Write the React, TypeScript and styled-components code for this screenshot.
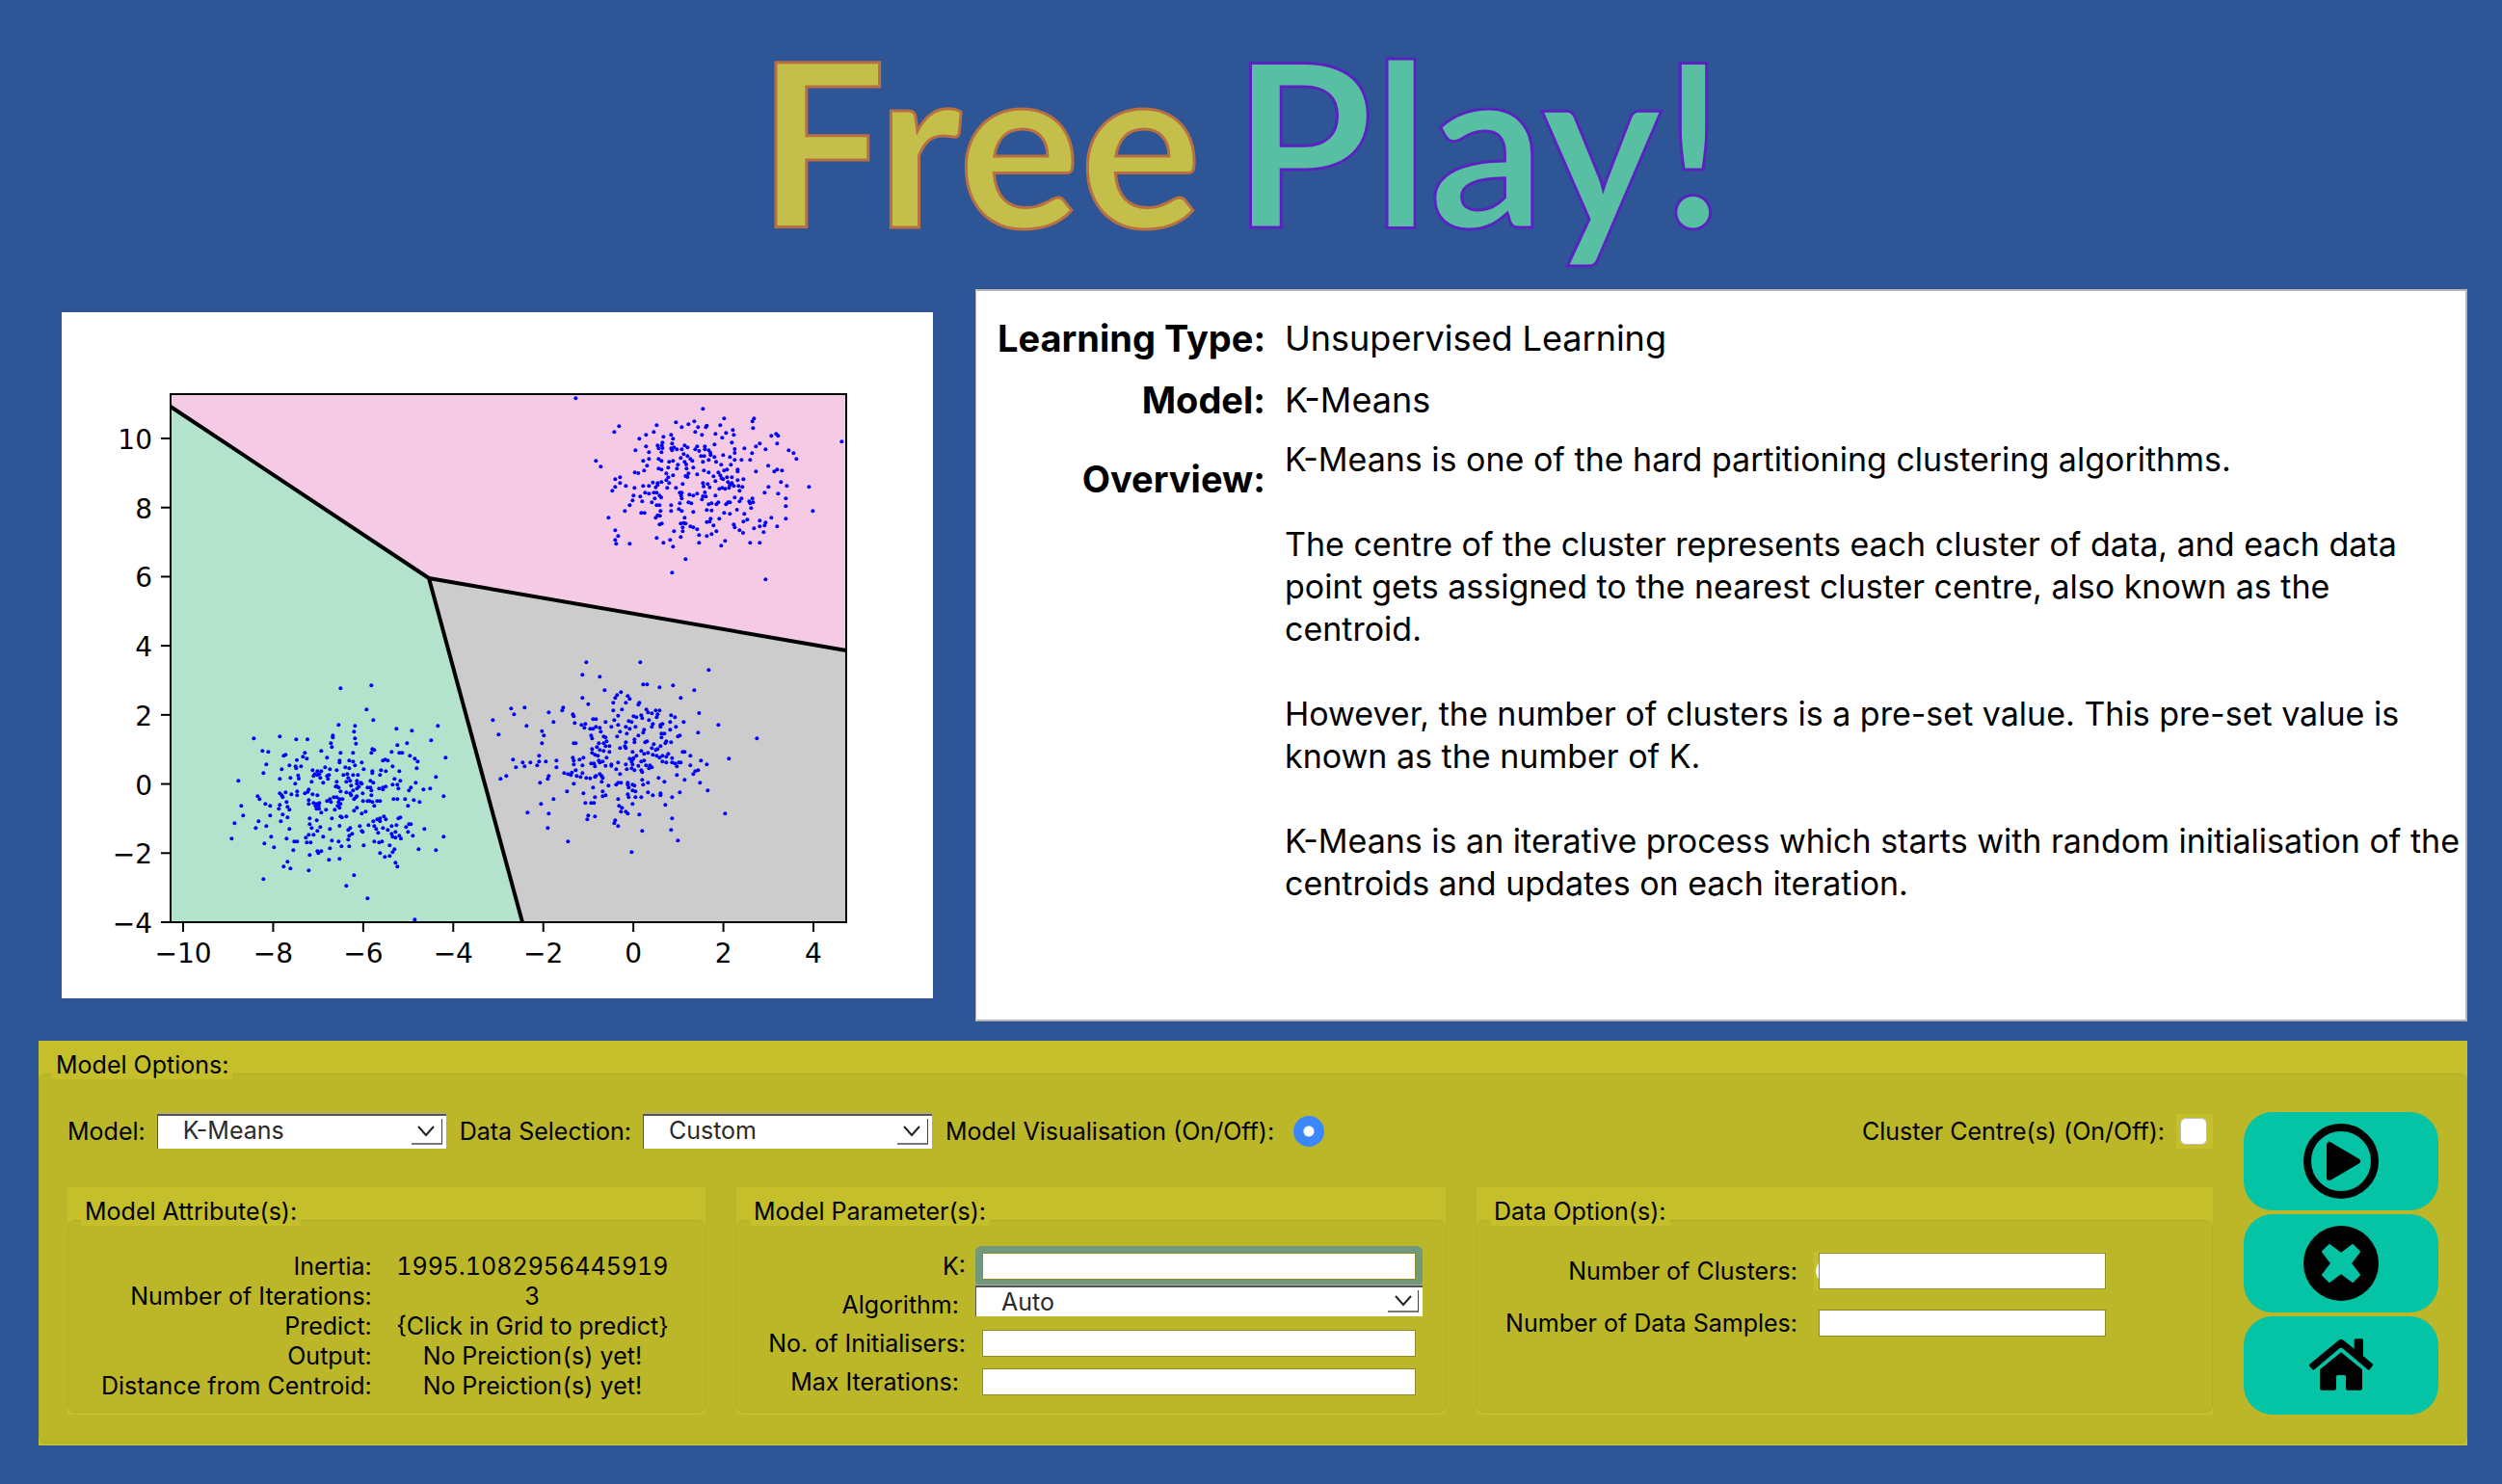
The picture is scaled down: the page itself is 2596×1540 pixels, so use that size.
import React from "react";
import styled, { createGlobalStyle } from "styled-components";

const GlobalStyle = createGlobalStyle`
  *, *::before, *::after { box-sizing: border-box; }
  body { margin: 0; background: #2e5596; }
`;

const LIGHT = "#c4bf2b";
const OLIVE = "#bbb729";
const EDGE = "#b2ad27";

const Page = styled.main`
  min-height: 100vh;
  padding: 0 36px 40px 40px;
  background: #2e5596;
  color: #000;
  font: 400 25px/30px Inter, "Liberation Sans", sans-serif;
`;

const Title = styled.h1`
  display: flex;
  justify-content: center;
  gap: 32px;
  height: 300px;
  margin: 0;
  padding: 10px 24px 0 0;
  font: 700 236px/270px Lato, "Open Sans", sans-serif;
`;

const TitleWord = styled.span<{ $fill: string; $edge: string }>`
  color: ${(p) => p.$fill};
  -webkit-text-stroke: 3px ${(p) => p.$edge};
`;

const Upper = styled.div`
  display: grid;
  grid-template-columns: 928fr 1548fr;
  gap: 44px;
  align-items: start;
`;

const PlotArea = styled.figure`
  margin: 0;
  padding: 24px 0 0 24px;
`;

const Plot = styled.svg`
  display: block;
  width: 100%;
  background: #fff;
  font: 28px "DejaVu Sans", sans-serif;
`;

const Info = styled.section`
  min-height: 760px;
  padding: 27px 4px 0 22px;
  background: #fff;
  border: 2px solid #b4b4b4;
  border-left-width: 1px;
`;

const InfoGrid = styled.dl`
  display: grid;
  grid-template-columns: 278px 1fr;
  grid-template-rows: 64px 62px auto;
  column-gap: 20px;
  margin: 0;
  line-height: 44px;
`;

const InfoLabel = styled.dt<{ $low?: boolean }>`
  padding-top: ${(p) => (p.$low ? "20px" : "0")};
  font-size: 38px;
  font-weight: 700;
  text-align: right;
  white-space: nowrap;
`;

const InfoValue = styled.dd`
  margin: 0;
  font-size: 36px;
`;

const Overview = styled.dd`
  margin: 0;
  font-size: 34px;

  p {
    margin: 0 0 44px;
  }
`;

const Group = styled.section`
  display: flex;
  flex-direction: column;
  background: ${LIGHT};
  padding-bottom: 2px;
`;

const GroupTitle = styled.h2`
  z-index: 1;
  align-self: flex-start;
  height: 40px;
  margin: 0 0 -6px 14px;
  padding: 10px 4px 0;
  background: ${LIGHT};
  font-size: 25px;
  font-weight: 400;
  line-height: 30px;
`;

const GroupBody = styled.div`
  flex: 1;
  background: ${OLIVE};
  border: 1px solid ${EDGE};
  border-radius: 8px;
`;

const OptionsGroup = styled(Group)`
  margin-top: 20px;
`;

const OptionsBody = styled(GroupBody)`
  display: grid;
  grid-template-columns: 1fr 202px;
  gap: 32px;
  padding: 39px 29px;
  padding-bottom: 29px;
`;

const Settings = styled.div`
  display: flex;
  flex-direction: column;
  gap: 38px;
`;

const OptionsRow = styled.div`
  display: flex;
  align-items: center;
  height: 40px;
`;

const Field = styled.div`
  display: flex;
  align-items: center;
  gap: 12px;
  margin-right: 14px;
`;

const EndField = styled(Field)`
  margin: 0 0 0 auto;
`;

const Label = styled.label`
  white-space: nowrap;
`;

const SelectBox = styled.div<{ $width: string; $height: number }>`
  position: relative;
  width: ${(p) => p.$width};
  height: ${(p) => p.$height}px;
`;

const SelectInput = styled.select`
  appearance: none;
  display: block;
  width: 100%;
  height: 100%;
  padding: 0 40px 4px 26px;
  border: 0 solid #555;
  border-width: 2px 0 0 1px;
  border-radius: 0;
  background: #fff;
  box-shadow: 0 -1px 0 #a8a8a8;
  color: #2a2a2a;
  font: inherit;
`;

const SelectArrow = styled.span`
  position: absolute;
  top: 5px;
  right: 4px;
  bottom: 4px;
  width: 32px;
  display: flex;
  align-items: center;
  justify-content: center;
  border-right: 1px solid #444;
  border-bottom: 2px solid #777;
  pointer-events: none;
`;

const Radio = styled.input`
  appearance: none;
  width: 32px;
  height: 32px;
  margin: 0 0 0 8px;
  border: 0;
  border-radius: 50%;
  background: radial-gradient(circle, #fff 0 5px, #3b87fd 6px);
`;

const CheckPad = styled.span`
  display: flex;
  padding: 4px 6px 4px 4px;
  background: ${LIGHT};
`;

const Check = styled.input`
  appearance: none;
  width: 28px;
  height: 28px;
  margin: 0;
  border: 1px solid #bdbdbd;
  border-radius: 6px;
  background: #fff;
`;

const Groups = styled.div`
  display: grid;
  grid-template-columns: 662fr 736fr 764fr;
  gap: 32px;
  height: 236px;
`;

const Attributes = styled.table`
  width: 100%;
  margin-top: 32px;
  border-collapse: collapse;
  table-layout: fixed;
  line-height: 31px;

  th {
    width: 48%;
    padding: 0 2px 0 0;
    font-weight: 400;
    text-align: right;
    white-space: nowrap;
  }

  td {
    padding: 0 14px 0 0;
    font-variant-numeric: tabular-nums;
    text-align: center;
    white-space: nowrap;
  }
`;

const ParamRow = styled.div`
  display: grid;
  grid-template-columns: 237fr 464fr 13fr;
  column-gap: 10px;
  height: 40px;
  align-items: center;

  &:first-child {
    margin-top: 27px;
  }
`;

const ParamLabel = styled(Label)`
  text-align: right;
  white-space: pre;
`;

const ParamControl = styled.div`
  align-self: start;
  width: 100%;
`;

const TextInput = styled.input<{ $height?: number; $focused?: boolean }>`
  display: block;
  width: 100%;
  height: ${(p) => p.$height ?? 28}px;
  padding: 0 6px;
  border: 1px solid #8f8a24;
  border-radius: 0;
  outline: 0;
  background: #fff;
  box-shadow: ${(p) => (p.$focused ? "0 0 0 7px #73997c" : "none")};
  clip-path: ${(p) => (p.$focused ? "inset(-7px round 6px)" : "none")};
  font: inherit;
`;

const InputInset = styled.div`
  padding: 0 7px;
`;

const DataRow = styled.div`
  display: grid;
  grid-template-columns: 332fr 304fr 92fr;
  column-gap: 17px;
  align-items: center;
  height: 40px;

  & + & {
    margin-top: 14px;
  }

  &:first-child {
    margin-top: 32px;
  }
`;

const DataControl = styled.div<{ $lit?: boolean }>`
  padding: 0 1px 0 5px;
  height: 40px;
  display: flex;
  align-items: center;
  background: ${(p) =>
    p.$lit
      ? `radial-gradient(ellipse 6px 10px at 8px 20px, #fff 90%, ${LIGHT})`
      : "none"};
`;

const Actions = styled.nav`
  display: grid;
  grid-template-rows: repeat(3, 102px);
  gap: 4px;
`;

const ActionButton = styled.button`
  display: flex;
  align-items: center;
  justify-content: center;
  padding: 0;
  border: 0;
  border-radius: 30px;
  background: #05c3a5;
  cursor: pointer;
`;

/* Sample positions, in thirds of a plot pixel from each cluster's own origin. */
const UPPER = `22,40 418,73 157,127 142,145 85,235 100,253 850,175 484,103 577,103 572,112 574,133 334,115 391,112 373,121 352,130 403,130 430,125 427,130 472,124 274,124 265,145 241,154 220,166 295,160 319,154 325,166 322,181 394,145 415,154 457,151 490,148 478,163 511,139 514,154 508,178 631,157 646,151 652,157 649,181 595,181 583,190 613,199 571,211 547,196 685,202 700,211 709,229 208,202 241,190 250,208 277,187 292,178 290,187 280,196 292,195 289,208 319,196 328,193 322,202 337,199 352,199 361,187 370,193 358,214 370,220 349,226 379,229 385,235 361,238 340,247 366,246 367,259 325,235 313,238 310,256 337,259 388,256 304,274 325,280 373,274 370,285 364,282 400,277 310,286 304,295 289,301 313,304 307,319 334,319 355,307 394,199 400,190 406,204 424,190 424,199 436,202 441,209 442,217 454,184 454,223 412,220 422,220 418,238 436,232 459,238 481,217 475,247 502,223 517,198 517,210 517,232 538,232 565,232 505,247 421,265 436,271 466,271 484,265 493,262 526,262 526,268 583,268 621,250 640,268 649,262 664,265 451,283 472,280 476,289 481,292 493,286 508,286 457,298 526,295 544,292 496,301 508,304 418,304 433,307 420,314 439,317 469,322 478,319 487,322 499,319 502,310 514,313 529,313 541,316 532,328 661,301 679,313 622,316 610,334 652,337 676,352 676,376 676,415 748,316 760,391 232,235 250,229 280,229 289,235 244,250 235,265 280,259 289,262 206,271 217,273 145,292 160,286 160,304 145,316 136,328 178,313 205,319 232,313 250,313 262,302 277,304 277,310 271,317 202,343 199,358 223,346 229,361 190,373 175,391 238,334 250,337 265,334 274,334 283,343 288,349 268,352 259,364 274,373 283,373 226,397 236,397 124,412 271,412 277,404 284,406 286,391 283,433 290,430 319,373 319,391 346,334 352,334 350,343 352,352 376,340 388,343 400,337 424,333 418,345 427,346 415,355 346,367 373,364 382,367 343,385 352,391 388,394 436,370 445,367 457,343 460,370 466,364 430,388 445,389 490,370 496,364 502,364 517,349 538,352 532,361 562,361 572,352 565,367 574,364 568,382 524,387 484,397 502,400 547,400 469,415 442,415 430,425 439,424 451,436 361,412 349,430 358,428 364,430 355,442 355,454 379,439 388,442 400,448 349,472 328,454 316,481 325,502 295,490 274,475 406,466 406,490 430,469 445,463 460,454 514,433 517,442 532,451 543,459 544,424 556,418 577,445 595,421 595,439 613,427 610,436 607,457 631,412 649,439 487,484 475,499 565,490 595,490 145,451 154,469 145,481 148,493 190,493 364,541 322,583 613,604`;
const LEFT = `400,103 496,94 481,169 502,202 394,217 445,220 442,238 445,259 448,275 574,229 622,235 703,220 682,265 727,319 697,379 721,439 721,565 697,607 643,604 661,541 130,259 211,253 262,262 297,262 376,250 376,256 370,274 373,286 340,298 157,298 175,301 223,313 229,310 289,304 283,316 295,322 264,326 358,319 400,304 439,304 496,304 499,292 505,295 577,280 607,274 559,301 583,304 592,304 616,313 631,322 640,331 637,352 532,328 539,325 547,328 562,346 583,361 169,340 160,367 82,391 217,355 241,343 260,346 262,352 277,346 211,385 244,382 268,374 270,384 259,400 313,358 328,361 340,361 320,370 316,376 328,373 334,370 337,382 346,397 310,394 352,349 367,355 388,358 358,376 364,373 361,385 397,328 397,334 427,328 439,331 445,343 466,334 415,349 427,352 409,373 421,370 424,382 439,373 454,373 472,355 499,361 499,367 526,358 541,361 523,373 430,391 418,394 451,391 451,400 463,397 466,400 433,406 457,409 451,415 439,421 388,394 388,407 385,409 394,412 400,424 418,427 430,430 433,436 469,430 493,391 502,397 484,412 493,412 496,421 496,436 520,415 532,412 541,409 532,418 568,385 586,391 562,403 577,403 580,415 634,397 619,412 613,421 658,418 679,415 646,457 628,451 610,469 601,448 577,448 565,448 142,439 148,448 91,469 97,499 70,523 61,571 166,463 181,469 181,499 145,517 136,538 169,532 184,565 163,586 193,598 211,430 217,436 220,442 229,427 247,433 265,424 265,436 289,430 298,425 301,418 313,433 328,436 301,451 301,463 316,460 325,463 334,460 322,469 332,469 325,478 333,478 340,490 355,481 358,454 367,448 370,457 379,442 388,442 397,448 406,448 394,457 400,463 391,469 397,475 382,481 442,448 448,442 451,439 470,454 484,454 490,454 499,457 514,454 523,454 505,469 442,484 451,475 466,493 478,487 418,502 400,502 404,505 373,508 397,531 211,466 208,478 232,457 235,472 241,481 220,496 235,505 214,517 241,541 232,571 256,580 265,580 304,508 304,526 310,538 326,514 337,535 328,547 301,559 316,559 292,568 295,583 307,583 346,565 367,541 373,577 394,580 424,574 427,562 436,556 424,544 430,538 460,532 466,547 469,550 487,529 502,517 514,511 523,508 523,517 535,502 541,511 505,532 511,541 517,553 532,538 547,544 559,532 574,529 559,556 571,550 562,565 571,568 583,562 588,571 580,508 586,505 604,535 613,526 619,526 610,550 625,562 505,580 520,583 529,580 253,607 304,622 328,610 340,610 331,616 367,601 403,595 427,595 472,592 364,637 397,634 523,616 538,628 553,625 553,592 562,613 568,604 571,646 577,658 235,643 223,658 244,664 301,670 160,697 442,685 418,718 484,757 631,823`;
const RIGHT = `325,82 313,121 367,127 493,82 706,106 502,151 514,151 553,160 595,154 661,169 619,193 382,169 313,193 331,212 433,175 421,184 415,193 409,208 448,208 454,187 460,196 490,208 487,214 436,229 409,232 676,240 736,277 856,319 769,382 673,301 703,481 757,553 34,262 52,307 91,226 100,244 133,223 139,280 208,238 223,268 253,223 250,232 187,296 193,310 187,334 283,244 286,250 289,271 310,277 322,274 319,286 346,259 355,259 337,289 346,289 355,283 367,286 370,298 385,268 403,283 412,262 424,248 424,277 430,298 421,313 340,310 343,319 379,313 385,316 388,328 364,334 379,334 385,343 397,343 397,361 379,358 367,355 358,346 343,352 343,364 352,370 361,373 286,334 292,334 472,250 481,253 496,247 499,256 457,265 466,268 448,283 460,289 478,283 451,304 505,292 502,301 487,310 475,322 475,331 448,331 445,343 448,349 430,349 512,229 517,238 529,241 541,232 553,232 547,244 544,253 520,262 532,274 529,283 556,277 562,274 556,283 589,247 601,253 586,268 586,292 604,283 628,268 610,313 616,310 559,304 568,304 559,316 574,328 589,331 571,334 535,337 529,349 547,352 541,355 556,343 508,331 514,328 496,358 505,367 517,364 469,361 178,373 97,385 106,409 127,394 133,406 151,394 172,403 178,391 199,391 232,388 232,409 283,379 286,388 286,400 304,385 316,379 313,403 340,397 349,397 352,406 364,388 367,394 376,391 388,379 385,404 403,404 403,400 418,415 424,394 448,400 460,382 469,385 472,380 481,373 466,391 469,400 451,415 466,412 475,418 487,404 496,391 505,388 496,418 499,424 511,403 523,403 529,409 520,412 532,370 544,373 553,379 562,373 562,391 574,376 580,367 574,394 592,380 592,394 601,397 607,406 613,394 619,394 625,361 631,361 649,373 649,403 682,388 700,400 673,418 664,421 658,430 679,457 607,433 631,448 616,487 550,442 568,454 256,427 268,430 277,433 280,425 292,418 295,436 307,439 313,427 325,442 337,443 352,439 355,436 367,430 373,436 376,442 373,454 394,466 418,463 424,457 433,457 430,430 454,457 454,463 457,472 469,463 475,466 469,481 478,484 499,448 502,463 517,457 58,445 76,436 181,457 205,445 208,436 265,484 286,460 346,472 316,490 376,484 376,499 385,496 352,502 322,520 340,520 349,520 223,508 184,523 142,550 208,553 205,598 268,640 331,559 328,571 352,562 424,508 427,529 436,535 433,547 448,547 454,553 454,493 457,502 478,502 469,523 496,502 517,487 532,496 556,490 556,496 592,502 571,526 490,556 415,574 412,583 424,592 499,607 592,568 589,604 610,637 466,673`;

const CLUSTERS = [
  { x: 526, y: 76, points: UPPER },
  { x: 156, y: 356, points: LEFT },
  { x: 436, y: 336, points: RIGHT },
];

const X_TICKS = [-10, -8, -6, -4, -2, 0, 2, 4].map((v, i) => ({
  text: String(v).replace("-", "−"),
  at: 126 + (i * 654) / 7,
}));
const Y_TICKS = [10, 8, 6, 4, 2, 0, -2, -4].map((v, i) => ({
  text: String(v).replace("-", "−"),
  at: 131 + (i * 502) / 7,
}));

function ClusterPlot() {
  return (
    <PlotArea>
      <Plot viewBox="0 0 904 712" role="img" aria-label="K-Means clusters">
        <rect x="113" y="85" width="701" height="548" fill="#f4cae4" />
        <path d="M113 98L381 276L478 633H113Z" fill="#b3e2cd" />
        <path d="M381 276L814 351V633H478Z" fill="#ccc" />
        {CLUSTERS.map((c) => (
          <g key={c.x} fill="#00f" transform={`translate(${c.x} ${c.y}) scale(${1 / 3})`}>
            {c.points.split(" ").map((p, i) => {
              const [cx, cy] = p.split(",");
              return <circle key={i} cx={cx} cy={cy} r="6" />;
            })}
          </g>
        ))}
        <path
          d="M113 98L381 276L814 351M381 276L478 633"
          fill="none"
          stroke="#000"
          strokeWidth="4"
        />
        <rect x="113" y="85" width="701" height="548" fill="none" stroke="#000" strokeWidth="2" />
        {X_TICKS.map((t) => (
          <g key={t.text}>
            <path d={`M${t.at} 633v10`} stroke="#000" strokeWidth="2" />
            <text x={t.at} y="675" textAnchor="middle">
              {t.text}
            </text>
          </g>
        ))}
        {Y_TICKS.map((t) => (
          <g key={t.text}>
            <path d={`M113 ${t.at}h-10`} stroke="#000" strokeWidth="2" />
            <text x="94" y={t.at + 11} textAnchor="end">
              {t.text}
            </text>
          </g>
        ))}
      </Plot>
    </PlotArea>
  );
}

function Dropdown(props: { id: string; value: string; width: string; height: number }) {
  return (
    <SelectBox $width={props.width} $height={props.height}>
      <SelectInput id={props.id} defaultValue={props.value}>
        <option>{props.value}</option>
      </SelectInput>
      <SelectArrow>
        <svg width="18" height="12" viewBox="0 0 18 12" fill="none" stroke="#222" strokeWidth="2">
          <path d="M1 1L9 10L17 1" />
        </svg>
      </SelectArrow>
    </SelectBox>
  );
}

const ATTRIBUTES = [
  ["Inertia:", "1995.1082956445919"],
  ["Number of Iterations:", "3"],
  ["Predict:", "{Click in Grid to predict}"],
  ["Output:", "No Preiction(s) yet!"],
  ["Distance from Centroid:", "No Preiction(s) yet!"],
];

export default function App() {
  return (
    <>
      <GlobalStyle />
      <Page>
        <Title>
          <TitleWord $fill="#c3bf4a" $edge="#b86f42">
            Free
          </TitleWord>
          <TitleWord $fill="#58bfa3" $edge="#5a22c0">
            Play!
          </TitleWord>
        </Title>

        <Upper>
          <ClusterPlot />
          <Info>
            <InfoGrid>
              <InfoLabel>Learning Type:</InfoLabel>
              <InfoValue>Unsupervised Learning</InfoValue>
              <InfoLabel>Model:</InfoLabel>
              <InfoValue>K-Means</InfoValue>
              <InfoLabel $low>Overview:</InfoLabel>
              <Overview>
                <p>K-Means is one of the hard partitioning clustering algorithms.</p>
                <p>
                  The centre of the cluster represents each cluster of data, and each data point
                  gets assigned to the nearest cluster centre, also known as the centroid.
                </p>
                <p>
                  However, the number of clusters is a pre-set value. This pre-set value is known
                  as the number of K.
                </p>
                <p>
                  K-Means is an iterative process which starts with random initialisation of the
                  centroids and updates on each iteration.
                </p>
              </Overview>
            </InfoGrid>
          </Info>
        </Upper>

        <OptionsGroup>
          <GroupTitle>Model Options:</GroupTitle>
          <OptionsBody>
            <Settings>
              <OptionsRow>
                <Field>
                  <Label htmlFor="model">Model:</Label>
                  <Dropdown id="model" value="K-Means" width="300px" height={36} />
                </Field>
                <Field>
                  <Label htmlFor="data">Data Selection:</Label>
                  <Dropdown id="data" value="Custom" width="300px" height={36} />
                </Field>
                <Field>
                  <Label htmlFor="visualise">Model Visualisation (On/Off):</Label>
                  <Radio id="visualise" type="radio" defaultChecked />
                </Field>
                <EndField>
                  <Label htmlFor="centres">Cluster Centre(s) (On/Off):</Label>
                  <CheckPad>
                    <Check id="centres" type="checkbox" />
                  </CheckPad>
                </EndField>
              </OptionsRow>

              <Groups>
                <Group>
                  <GroupTitle>Model Attribute(s):</GroupTitle>
                  <GroupBody>
                    <Attributes>
                      <tbody>
                        {ATTRIBUTES.map(([name, value]) => (
                          <tr key={name}>
                            <th scope="row">{name}</th>
                            <td>{value}</td>
                          </tr>
                        ))}
                      </tbody>
                    </Attributes>
                  </GroupBody>
                </Group>

                <Group>
                  <GroupTitle>Model Parameter(s):</GroupTitle>
                  <GroupBody>
                    <ParamRow>
                      <ParamLabel htmlFor="k">K:</ParamLabel>
                      <InputInset>
                        <TextInput id="k" $focused />
                      </InputInset>
                    </ParamRow>
                    <ParamRow>
                      <ParamLabel htmlFor="algorithm">{"Algorithm:\u00a0"}</ParamLabel>
                      <ParamControl>
                        <Dropdown id="algorithm" value="Auto" width="100%" height={32} />
                      </ParamControl>
                    </ParamRow>
                    <ParamRow>
                      <ParamLabel htmlFor="initialisers">No. of Initialisers:</ParamLabel>
                      <InputInset>
                        <TextInput id="initialisers" />
                      </InputInset>
                    </ParamRow>
                    <ParamRow>
                      <ParamLabel htmlFor="iterations">{"Max Iterations:\u00a0"}</ParamLabel>
                      <InputInset>
                        <TextInput id="iterations" />
                      </InputInset>
                    </ParamRow>
                  </GroupBody>
                </Group>

                <Group>
                  <GroupTitle>Data Option(s):</GroupTitle>
                  <GroupBody>
                    <DataRow>
                      <ParamLabel htmlFor="clusters">Number of Clusters:</ParamLabel>
                      <DataControl $lit>
                        <TextInput id="clusters" $height={38} />
                      </DataControl>
                    </DataRow>
                    <DataRow>
                      <ParamLabel htmlFor="samples">Number of Data Samples:</ParamLabel>
                      <DataControl>
                        <TextInput id="samples" $height={28} />
                      </DataControl>
                    </DataRow>
                  </GroupBody>
                </Group>
              </Groups>
            </Settings>

            <Actions aria-label="Actions">
              <ActionButton aria-label="Play">
                <svg width="78" height="78" viewBox="-39 -39 78 78">
                  <circle r="35" fill="none" stroke="#000" strokeWidth="8" />
                  <path
                    d="M-12 -17V17L17 0Z"
                    stroke="#000"
                    strokeWidth="6"
                    strokeLinejoin="round"
                  />
                </svg>
              </ActionButton>
              <ActionButton aria-label="Stop">
                <svg width="78" height="78" viewBox="-39 -39 78 78">
                  <circle r="39" />
                  <path
                    d="M0 -10L12 -19L19 -12L10 0L19 12L12 19L0 10L-12 19L-19 12L-10 0L-19 -12L-12 -19Z"
                    fill="#05c3a5"
                    stroke="#05c3a5"
                    strokeWidth="2"
                    strokeLinejoin="round"
                  />
                </svg>
              </ActionButton>
              <ActionButton aria-label="Home">
                <svg width="78" height="78" viewBox="270 744 234 234">
                  <path d="M289 857L380 782Q387 777 394 782L428 809V782Q428 778 432 778H452Q456 778 456 782V832L485 856Q487 859 485 862L476 874Q473 876 470 874L391 807Q387 804 383 807L304 874Q301 876 298 874L289 863Q287 860 289 857Z" />
                  <path d="M321 874L387 820L453 874V932Q453 938 447 938H408Q402 938 402 932V896Q402 891 397 891H377Q372 891 372 896V932Q372 938 366 938H327Q321 938 321 932Z" />
                </svg>
              </ActionButton>
            </Actions>
          </OptionsBody>
        </OptionsGroup>
      </Page>
    </>
  );
}
